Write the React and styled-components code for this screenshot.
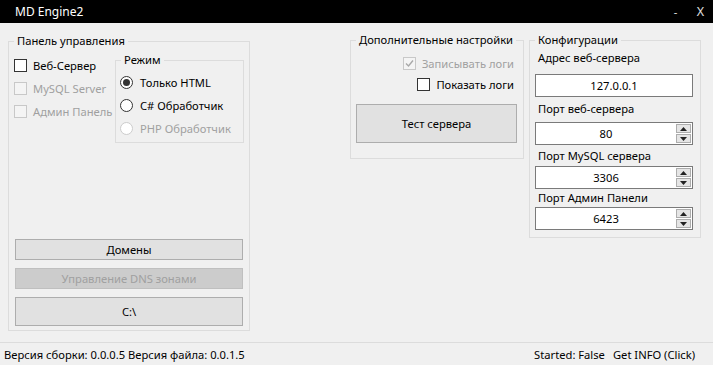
import React from 'react';
import styled, { createGlobalStyle } from 'styled-components';

const GlobalStyle = createGlobalStyle`
  html, body { margin: 0; padding: 0; background: #f0f0f0; }
  body {
    font-family: "Noto Sans", "Open Sans", sans-serif;
    font-size: 11.2px;
    color: #000;
  }
`;

const Window = styled.div`
  width: 713px;
  height: 365px;
  display: flex;
  flex-direction: column;
  background: #f0f0f0;
  overflow: hidden;
`;

const TitleBar = styled.div`
  height: 23px;
  background: #000;
  color: #fff;
  display: flex;
  align-items: center;
  padding-left: 15px;
  font-size: 12px;
`;

const Title = styled.div`
  flex: 1;
`;

const WinButton = styled.div`
  width: 25px;
  text-align: center;
  color: #e0e0e0;
  font-size: ${p => (p.$small ? '11px' : '12.5px')};
`;

const Body = styled.div`
  flex: 1;
  display: flex;
  align-items: flex-start;
  padding: 17px 0 0 8px;
`;

const Group = styled.div`
  position: relative;
  box-sizing: border-box;
  width: ${p => p.$w}px;
  height: ${p => p.$h}px;
  margin-top: ${p => p.$mt || 0}px;
  margin-left: ${p => p.$ml || 0}px;
  border: 1px solid #dcdcdc;
  display: flex;
  flex-direction: column;
`;

const Legend = styled.div`
  position: absolute;
  top: -9px;
  left: 5px;
  padding: 0 3px;
  line-height: 16px;
  background: #f0f0f0;
  color: #000;
  white-space: nowrap;
`;

const TopRow = styled.div`
  display: flex;
  align-items: flex-start;
`;

const CheckColumn = styled.div`
  width: 101px;
  padding: 12px 0 0 5px;
  display: flex;
  flex-direction: column;
`;

const CheckRow = styled.div`
  height: ${p => p.$h || 23}px;
  display: flex;
  align-items: center;
  justify-content: ${p => (p.$right ? 'flex-end' : 'flex-start')};
  gap: 6px;
  color: ${p => (p.$disabled ? '#a0a0a0' : '#000')};
  white-space: nowrap;
`;

const Box = styled.span`
  box-sizing: border-box;
  width: 13px;
  height: 13px;
  border: 1px solid ${p => (p.$disabled ? '#c8c8c8' : '#333')};
  background: ${p => (p.$disabled ? '#f4f4f4' : '#fff')};
  display: flex;
  align-items: center;
  justify-content: center;
  flex-shrink: 0;
`;

const ModeGroup = styled(Group)`
  margin-top: 18px;
  padding: 10px 0 0 4px;
`;

const RadioRow = styled.div`
  height: 23px;
  display: flex;
  align-items: center;
  gap: 7px;
  color: ${p => (p.$disabled ? '#a0a0a0' : '#000')};
  white-space: nowrap;
`;

const Circle = styled.span`
  box-sizing: border-box;
  width: 13px;
  height: 13px;
  border-radius: 50%;
  border: 1px solid ${p => (p.$disabled ? '#cccccc' : '#333')};
  background: #fff;
  display: flex;
  align-items: center;
  justify-content: center;
  flex-shrink: 0;

  &::after {
    content: '';
    display: ${p => (p.$checked ? 'block' : 'none')};
    width: 7px;
    height: 7px;
    border-radius: 50%;
    background: #333;
  }
`;

const ButtonStack = styled.div`
  margin-top: auto;
  padding: 0 6px 4px 6px;
  display: flex;
  flex-direction: column;
  gap: 8px;
`;

const Button = styled.div`
  box-sizing: border-box;
  height: ${p => p.$h}px;
  width: ${p => (p.$w ? `${p.$w}px` : 'auto')};
  margin-top: ${p => p.$mt || 0}px;
  border: 1px solid ${p => (p.$disabled ? '#bfbfbf' : '#adadad')};
  background: ${p => (p.$disabled ? '#cccccc' : '#e1e1e1')};
  color: ${p => (p.$disabled ? '#a0a0a0' : '#000')};
  display: flex;
  align-items: center;
  justify-content: center;
`;

const ExtraBody = styled.div`
  padding: 12px 9px 0 5px;
  display: flex;
  flex-direction: column;
`;

const ConfigBody = styled.div`
  padding: 8px 0 0 5px;
  display: flex;
  flex-direction: column;
`;

const Field = styled.div`
  margin-top: ${p => p.$mt}px;
  display: flex;
  flex-direction: column;
`;

const FieldLabel = styled.div`
  line-height: 18px;
  padding-left: 3px;
`;

const Input = styled.div`
  box-sizing: border-box;
  width: 158px;
  height: 23px;
  margin-top: ${p => p.$gap}px;
  border: 1px solid #7a7a7a;
  background: #fff;
  display: flex;
  align-items: stretch;
`;

const InputText = styled.div`
  flex: 1;
  display: flex;
  align-items: center;
  justify-content: center;
`;

const Spinner = styled.div`
  width: 15px;
  display: flex;
  flex-direction: column;
  gap: 1px;
  padding: 1px 1px 1px 0;
`;

const SpinButton = styled.div`
  flex: 1;
  box-sizing: border-box;
  border: 1px solid #adadad;
  background: #e5e5e5;
  display: flex;
  align-items: center;
  justify-content: center;
`;

const StatusBar = styled.div`
  height: 22px;
  border-top: 1px solid #dcdcdc;
  display: flex;
  align-items: center;
  padding: 0 18px 0 4px;
  gap: 8px;
`;

const StatusText = styled.div`
  white-space: nowrap;
  &:first-child { margin-right: auto; }
`;

const Check = ({ checked, disabled }) => (
  <Box $disabled={disabled}>
    {checked && (
      <svg width="9" height="9" viewBox="0 0 9 9">
        <path d="M1 4.5 L3.5 7 L8 1.5" fill="none" stroke={disabled ? '#a8a8a8' : '#333'} strokeWidth="1.4" />
      </svg>
    )}
  </Box>
);

const Arrow = ({ up }) => (
  <svg width="7" height="4" viewBox="0 0 7 4">
    <path d={up ? 'M0 4 L3.5 0 L7 4 Z' : 'M0 0 L7 0 L3.5 4 Z'} fill="#222" />
  </svg>
);

const NumberBox = ({ value, gap }) => (
  <Input $gap={gap}>
    <InputText>{value}</InputText>
    <Spinner>
      <SpinButton><Arrow up /></SpinButton>
      <SpinButton><Arrow /></SpinButton>
    </Spinner>
  </Input>
);

export default function App() {
  return (
    <Window>
      <GlobalStyle />
      <TitleBar>
        <Title>MD Engine2</Title>
        <WinButton $small>-</WinButton>
        <WinButton>X</WinButton>
      </TitleBar>

      <Body>
        <Group $w={242} $h={290} $mt={1}>
          <Legend>Панель управления</Legend>
          <TopRow>
            <CheckColumn>
              <CheckRow><Check />Веб-Сервер</CheckRow>
              <CheckRow $disabled><Check disabled />MySQL Server</CheckRow>
              <CheckRow $disabled><Check disabled />Админ Панель</CheckRow>
            </CheckColumn>
            <ModeGroup $w={129} $h={83}>
              <Legend>Режим</Legend>
              <RadioRow><Circle $checked />Только HTML</RadioRow>
              <RadioRow><Circle />C# Обработчик</RadioRow>
              <RadioRow $disabled><Circle $disabled />PHP Обработчик</RadioRow>
            </ModeGroup>
          </TopRow>
          <ButtonStack>
            <Button $h={21}>Домены</Button>
            <Button $h={21} $disabled>Управление DNS зонами</Button>
            <Button $h={29}>C:\</Button>
          </ButtonStack>
        </Group>

        <Group $w={174} $h={119} $ml={100}>
          <Legend>Дополнительные настройки</Legend>
          <ExtraBody>
            <CheckRow $right $disabled $h={21}><Check checked disabled />Записывать логи</CheckRow>
            <CheckRow $right $h={21}><Check />Показать логи</CheckRow>
            <Button $h={39} $w={161} $mt={9}>Тест сервера</Button>
          </ExtraBody>
        </Group>

        <Group $w={172} $h={198} $ml={5}>
          <Legend>Конфигурации</Legend>
          <ConfigBody>
            <Field $mt={0}>
              <FieldLabel>Адрес веб-сервера</FieldLabel>
              <Input $gap={7}><InputText>127.0.0.1</InputText></Input>
            </Field>
            <Field $mt={3}>
              <FieldLabel>Порт веб-сервера</FieldLabel>
              <NumberBox value="80" gap={4} />
            </Field>
            <Field $mt={2}>
              <FieldLabel>Порт MySQL сервера</FieldLabel>
              <NumberBox value="3306" gap={1} />
            </Field>
            <Field $mt={0}>
              <FieldLabel>Порт Админ Панели</FieldLabel>
              <NumberBox value="6423" gap={0} />
            </Field>
          </ConfigBody>
        </Group>
      </Body>

      <StatusBar>
        <StatusText>Версия сборки: 0.0.0.5 Версия файла: 0.0.1.5</StatusText>
        <StatusText>Started: False</StatusText>
        <StatusText>Get INFO (Click)</StatusText>
      </StatusBar>
    </Window>
  );
}
